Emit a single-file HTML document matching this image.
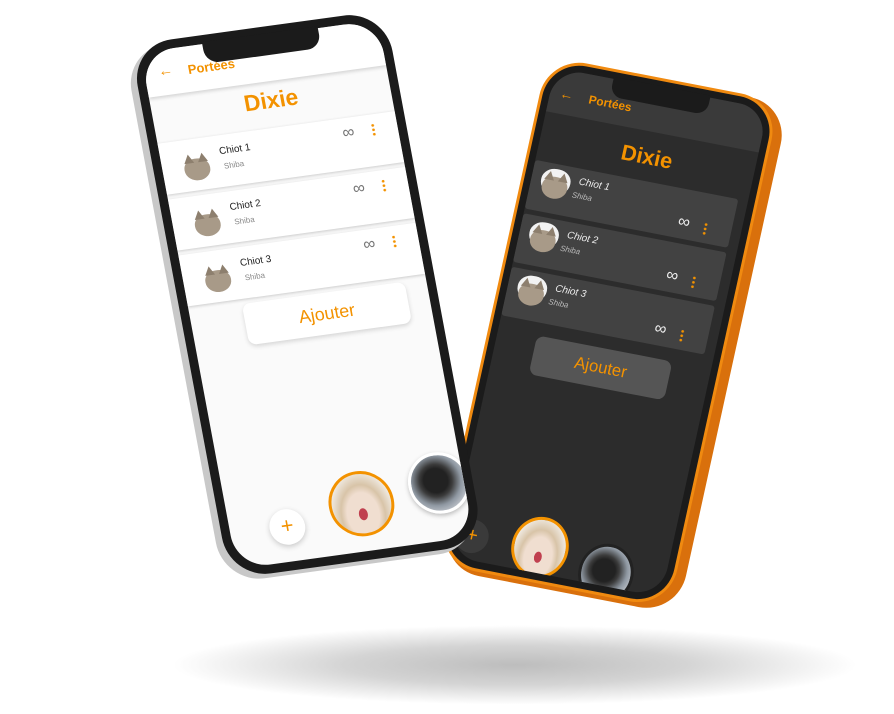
<!DOCTYPE html>
<html><head><meta charset="utf-8"><style>
*{margin:0;padding:0;box-sizing:border-box}
body{width:894px;height:714px;background:#fff;position:relative;overflow:hidden;font-family:"Liberation Sans",sans-serif}
.shadow{position:absolute;left:170px;top:625px;width:690px;height:80px;border-radius:50%;background:radial-gradient(ellipse at center,#bdbdbd 0%,#d4d4d4 35%,rgba(255,255,255,0) 70%)}
.ph{position:absolute;transform-origin:0 0}
.abs{position:absolute;white-space:nowrap}
.dog{position:absolute;width:26px;height:22px;border-radius:45% 45% 50% 50%;background:#a89a88}
.dog:before,.dog:after{content:"";position:absolute;top:-5px;width:0;height:0;border-left:5px solid transparent;border-right:5px solid transparent;border-bottom:9px solid #8d7f6e}
.dog:before{left:1px}.dog:after{right:1px}
.dk .dog{box-shadow:0 -6px 0 2px #f2f2f2}
.inf{position:absolute;font-size:17px;color:#777}
.dots{position:absolute;width:3px;height:14px;background:radial-gradient(circle,#f39200 1.2px,transparent 1.5px) 0 0/3px 4.5px}
.photo1{background:radial-gradient(ellipse at 50% 68%,#c0404f 0 10%,#f0ded0 11% 38%,#d8c4a8 52%,#efe9e0 75%)}
.photo2{background:radial-gradient(circle at 45% 45%,#222 0 28%,#3c3c3c 38%,#8f98a2 58%,#c8ccd2 80%)}
</style></head><body>
<div class="shadow"></div>

<!-- dark phone (behind) -->
<div class="ph dk" style="left:548px;top:56px;width:240px;height:525px;transform:matrix(0.967,0.1875,-0.213,0.971,0,0)">
  <div class="abs" style="left:4px;top:2px;width:246px;height:525px;border-radius:40px;background:#d9700c"></div>
  <div class="abs" style="left:0;top:0;width:240px;height:523px;border-radius:40px;background:#f08a10"></div>
  <div class="abs" style="left:3px;top:3px;width:234px;height:517px;border-radius:37px;background:#1b1b1b"></div>
  <div class="abs" style="left:10px;top:10px;width:220px;height:503px;border-radius:30px;background:#2c2c2c;overflow:hidden">
    <div class="abs" style="left:0;top:0;width:220px;height:45px;background:#3a3a3a"></div>
    <div class="abs" style="left:10px;top:16px;color:#f39200;font-size:14px">&#8592;</div>
    <div class="abs" style="left:40px;top:18px;color:#f39200;font-size:12px;font-weight:bold">Portées</div>
    <div class="abs" style="left:0;top:58px;width:220px;text-align:center;color:#f39200;font-size:22px;font-weight:bold">Dixie</div>
    <div class="abs" style="left:0;top:95px;width:210px;height:50px;background:#424242;border-radius:3px"></div>
    <div class="abs" style="left:0;top:150px;width:210px;height:50px;background:#424242;border-radius:3px"></div>
    <div class="abs" style="left:0;top:205px;width:210px;height:50px;background:#424242;border-radius:3px"></div>
    <div class="dog" style="left:12px;top:108px"></div>
    <div class="abs" style="left:48px;top:103px;color:#eee;font-size:10px;font-style:italic">Chiot 1</div>
    <div class="abs" style="left:44px;top:118px;color:#bbb;font-size:8px;font-style:italic">Shiba</div>
    <div class="inf" style="left:155px;top:118px;color:#eee">∞</div><div class="dots" style="left:182px;top:124px"></div>
    <div class="dog" style="left:12px;top:163px"></div>
    <div class="abs" style="left:48px;top:158px;color:#eee;font-size:10px;font-style:italic">Chiot 2</div>
    <div class="abs" style="left:44px;top:173px;color:#bbb;font-size:8px;font-style:italic">Shiba</div>
    <div class="inf" style="left:155px;top:173px;color:#eee">∞</div><div class="dots" style="left:182px;top:179px"></div>
    <div class="dog" style="left:12px;top:218px"></div>
    <div class="abs" style="left:48px;top:213px;color:#eee;font-size:10px;font-style:italic">Chiot 3</div>
    <div class="abs" style="left:44px;top:228px;color:#bbb;font-size:8px;font-style:italic">Shiba</div>
    <div class="inf" style="left:155px;top:228px;color:#eee">∞</div><div class="dots" style="left:182px;top:234px"></div>
    <div class="abs" style="left:40px;top:268px;width:140px;height:40px;border-radius:8px;background:#555;color:#f39200;font-size:17px;text-align:center;line-height:40px">Ajouter</div>
    <div class="abs" style="left:2px;top:462px;width:34px;height:34px;border-radius:50%;background:#3a3a3a;color:#f39200;font-size:20px;text-align:center;line-height:32px">+</div>
    <div class="abs photo1" style="left:60px;top:446px;width:58px;height:62px;border-radius:50%;border:3px solid #f39200"></div>
    <div class="abs photo2" style="left:132px;top:460px;width:56px;height:60px;border-radius:50%;border:3px solid #222"></div>
  </div>
  <div class="abs" style="left:70px;top:8px;width:100px;height:20px;border-radius:0 0 12px 12px;background:#1b1b1b"></div>
</div>

<!-- light phone (front) -->
<div class="ph" style="left:130px;top:45px;width:260px;height:545px;transform:matrix(0.98,-0.135,0.183,0.98,0,0)">
  <div class="abs" style="left:-7px;top:4px;width:262px;height:545px;border-radius:42px;background:#c8c8c8"></div>
  <div class="abs" style="left:0;top:0;width:260px;height:545px;border-radius:42px;background:#1b1b1b"></div>
  <div class="abs" style="left:9px;top:9px;width:242px;height:527px;border-radius:34px;background:#fafafa;overflow:hidden">
    <div class="abs" style="left:0;top:0;width:242px;height:46px;background:#fff;box-shadow:0 2px 4px rgba(0,0,0,.15)"></div>
    <div class="abs" style="left:14px;top:13px;color:#f39200;font-size:15px">&#8592;</div>
    <div class="abs" style="left:44px;top:16px;color:#f39200;font-size:13px;font-weight:bold">Portées</div>
    <div class="abs" style="left:0;top:52px;width:242px;text-align:center;color:#f39200;font-size:23px;font-weight:bold">Dixie</div>
    <div class="abs" style="left:0;top:93px;width:242px;height:52px;background:#fff;box-shadow:0 1px 3px rgba(0,0,0,.2)"></div>
    <div class="abs" style="left:0;top:150px;width:242px;height:52px;background:#fff;box-shadow:0 1px 3px rgba(0,0,0,.2)"></div>
    <div class="abs" style="left:0;top:207px;width:242px;height:52px;background:#fff;box-shadow:0 1px 3px rgba(0,0,0,.2)"></div>
    <div class="dog" style="left:22px;top:113px"></div>
    <div class="abs" style="left:60px;top:104px;color:#222;font-size:10px">Chiot 1</div>
    <div class="abs" style="left:62px;top:120px;color:#888;font-size:8px">Shiba</div>
    <div class="inf" style="left:186px;top:98px">∞</div><div class="dots" style="left:216px;top:102px"></div>
    <div class="dog" style="left:22px;top:170px"></div>
    <div class="abs" style="left:60px;top:161px;color:#222;font-size:10px">Chiot 2</div>
    <div class="abs" style="left:62px;top:177px;color:#888;font-size:8px">Shiba</div>
    <div class="inf" style="left:186px;top:155px">∞</div><div class="dots" style="left:216px;top:159px"></div>
    <div class="dog" style="left:22px;top:227px"></div>
    <div class="abs" style="left:60px;top:218px;color:#222;font-size:10px">Chiot 3</div>
    <div class="abs" style="left:62px;top:234px;color:#888;font-size:8px">Shiba</div>
    <div class="inf" style="left:186px;top:212px">∞</div><div class="dots" style="left:216px;top:216px"></div>
    <div class="abs" style="left:54px;top:264px;width:166px;height:42px;border-radius:8px;background:#fff;box-shadow:0 2px 5px rgba(0,0,0,.15);color:#f39200;font-size:18px;text-align:center;line-height:42px">Ajouter</div>
    <div class="abs" style="left:40px;top:474px;width:36px;height:36px;border-radius:50%;background:#fff;box-shadow:0 2px 6px rgba(0,0,0,.2);color:#f39200;font-size:22px;text-align:center;line-height:34px">+</div>
    <div class="abs photo1" style="left:103px;top:446px;width:66px;height:66px;border-radius:50%;border:3px solid #f39200"></div>
    <div class="abs photo2" style="left:186px;top:438px;width:62px;height:62px;border-radius:50%;border:3px solid #fff;box-shadow:0 2px 5px rgba(0,0,0,.25)"></div>
  </div>
  <div class="abs" style="left:72px;top:7px;width:118px;height:22px;border-radius:0 0 14px 14px;background:#1b1b1b"></div>
</div>
</body></html>
